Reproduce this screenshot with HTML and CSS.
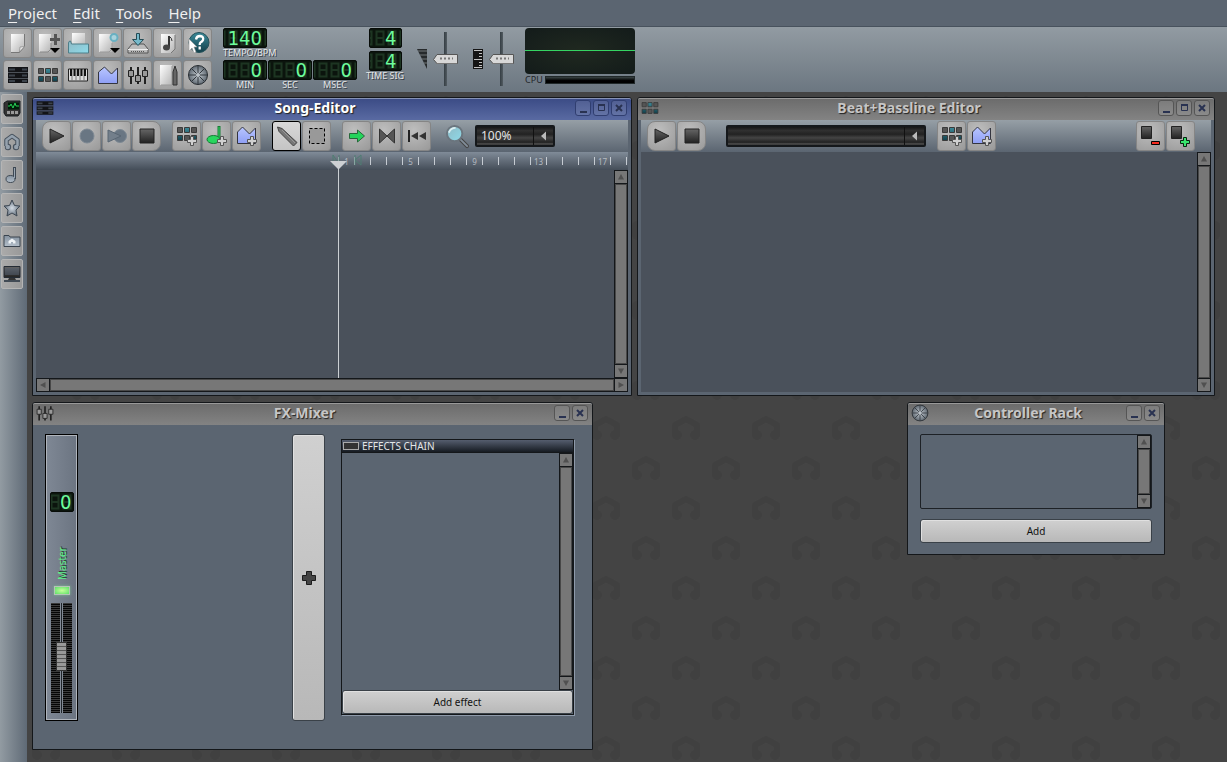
FILE: index.html
```html
<!DOCTYPE html>
<html lang="en">
<head>
  <meta charset="UTF-8">
  <meta name="viewport" content="width=device-width, initial-scale=1.0">
  <title>LMMS</title>
  <link rel="stylesheet" href="styles.css">
</head>
<body>

  <!-- Shared icons -->
  <svg class="defs" aria-hidden="true">
    <defs>
      <linearGradient id="dark" x1="0" y1="0" x2="0" y2="1"><stop offset="0" stop-color="#666"/><stop offset="1" stop-color="#222"/></linearGradient>
      <linearGradient id="paper" x1="0" y1="0" x2="1" y2="1"><stop offset="0" stop-color="#fff"/><stop offset="1" stop-color="#b4b4b4"/></linearGradient>
      <linearGradient id="cyan" x1="0" y1="0" x2="1" y2="1"><stop offset="0" stop-color="#8fb9c4"/><stop offset="1" stop-color="#8edbea"/></linearGradient>
      <linearGradient id="teal" x1="0" y1="0" x2="0" y2="1"><stop offset="0" stop-color="#3d8b9a"/><stop offset="1" stop-color="#123f4a"/></linearGradient>
      <linearGradient id="blue" x1="0" y1="0" x2="0" y2="1"><stop offset="0" stop-color="#b9c6ff"/><stop offset="1" stop-color="#8f9ff5"/></linearGradient>
      <linearGradient id="steel" x1="0" y1="0" x2="0" y2="1"><stop offset="0" stop-color="#8592a0"/><stop offset="1" stop-color="#b4bfca"/></linearGradient>
      <radialGradient id="disc" cx=".5" cy=".5" r=".6"><stop offset="0" stop-color="#c5ccd2"/><stop offset="1" stop-color="#4c5660"/></radialGradient>
      <radialGradient id="star-fill"><stop offset="0" stop-color="#d5dde6"/><stop offset="1" stop-color="#66727f"/></radialGradient>
    </defs>

    <symbol id="page" viewBox="0 0 24 24"><path d="M5 3h13v12l-5 6H5z" fill="url(#paper)"/><path d="M18.500 3v12.500l-5 6H5" fill="none" stroke="#777"/><path d="M13.500 21l.5-5 4.500-.5z" fill="#e4e4e4" stroke="#888" stroke-width=".7"/></symbol>
    <symbol id="new-from" viewBox="0 0 24 24"><path d="M3 3h12v18H3z" fill="url(#paper)"/><path d="M15 12v6l-3 3H4" fill="none" stroke="#888"/><path d="M14 7h4V3h3v4h4v3h-4v4h-3v-4h-4z" fill="#555"/><path d="M14 17h10l-5 5z"/></symbol>
    <symbol id="open" viewBox="0 0 24 24"><path d="M6 2h13v14H6z" fill="url(#paper)"/><path d="M2.500 12q0-2 2-2l1 3h17v9h-20z" fill="url(#cyan)" stroke="#4d7e89"/></symbol>
    <symbol id="recent" viewBox="0 0 24 24"><path d="M3 3h13v18H3z" fill="url(#paper)"/><path d="M16 12v6l-3 3H4" fill="none" stroke="#999"/><circle cx="18" cy="6.500" r="3.500" fill="#aad2dc" stroke="#69b0c2" stroke-width="2"/><path d="M14 17h10l-5 5z"/></symbol>
    <symbol id="save" viewBox="0 0 24 24"><path d="M6 13h12l4 5v4H2v-4z" fill="#bbb" stroke="#555"/><path d="M2 18.500h20" stroke="#eee"/><path d="M5 20.500h14" stroke="#555" stroke-dasharray="1"/><path d="M10.500 2.500h3v6h4L12 14.500 6.500 8.500h4z" fill="#76b9ca" stroke="#244b55"/></symbol>
    <symbol id="export" viewBox="0 0 24 24"><path d="M5 3h14v15l-4 4H5z" fill="url(#paper)"/><path d="M19 4v14l-4 4" fill="none" stroke="#777"/><path d="M13 5v11" stroke="#333" stroke-width="2"/><path d="M13 5q3 2 3 5" stroke="#333" fill="none"/><ellipse cx="10.500" cy="16.500" rx="3.500" ry="3" fill="#444"/></symbol>
    <symbol id="help" viewBox="0 0 24 24"><circle cx="13" cy="11.500" r="10" fill="url(#teal)" stroke="#235059"/><path d="M10 8.500q.5-3.500 4-3.500 4 .5 3 4-.7 1.500-2.500 2.500-.8.500-.8 2.500M13.700 15.500v3" fill="none" stroke="#fff" stroke-width="2.300"/><path d="M3 8v12l3-3 2 5 2-1-2-5h3z" fill="#fff" stroke="#999" stroke-width=".6"/></symbol>
    <symbol id="song" viewBox="0 0 24 24"><path d="M2 4h20v5H2zM2 10h20v5H2zM2 16h20v4H2z" fill="#121316"/><path d="M3 6.500h6M3 12.500h6M3 18h6M16 6.500h5M16 12.500h5M16 18h5" stroke="#3c434b" stroke-width="2"/><path d="M2 9.500h20M2 15.500h20" stroke="#4c5158"/></symbol>
    <symbol id="beats" viewBox="0 0 24 24"><g stroke="#3a3a3a"><path d="M2.500 5.500h5v5h-5zM16.500 5.500h5v5h-5zM9.500 13.500h5v5h-5z" fill="#555"/><path d="M9.500 5.500h5v5h-5zM2.500 13.500h5v5h-5zM16.500 13.500h5v5h-5z" fill="url(#teal)"/></g></symbol>
    <symbol id="beats-add" viewBox="0 0 24 24"><g stroke="#3a3a3a"><path d="M2.500 3.500h5v5h-5zM16.500 3.500h5v5h-5zM9.500 11.500h5v5h-5z" fill="#555"/><path d="M9.500 3.500h5v5h-5zM2.500 11.500h5v5h-5zM16.500 11.500h5v5h-5z" fill="url(#teal)"/></g><use href="#plus" width="24" height="24"/></symbol>
    <symbol id="plus" viewBox="0 0 24 24"><path d="M15.500 12.500h3v3h3v3h-3v3h-3v-3h-3v-3h3z" fill="#d0d0d0" stroke="#555"/></symbol>
    <symbol id="piano" viewBox="0 0 24 24"><path d="M2.500 6h19v12h-19z" fill="#ddd" stroke="#222"/><path d="M6 6v12M10 6v12M14 6v12M18 6v12" stroke="#777"/><path d="M5 6v7M8.500 6v7M12 6v7M15.500 6v7M19 6v7" stroke="#111" stroke-width="2"/></symbol>
    <symbol id="auto" viewBox="0 0 24 24"><path d="M2.500 20.500V9l6-5 7 7 6-6v15.500z" fill="url(#blue)" stroke="#34353f"/></symbol>
    <symbol id="auto-add" viewBox="0 0 24 24"><path d="M2.500 19.500V8l5-5 7 7 6-6v15.500z" fill="url(#blue)" stroke="#34353f"/><use href="#plus" width="24" height="24"/></symbol>
    <symbol id="mixer" viewBox="0 0 24 24"><path d="M5 4v17M12 4v17M19 4v17" stroke="#222" stroke-width="2"/><path d="M2.500 7.500h5v6h-5zM9.500 12.500h5v6h-5zM16.500 7.500h5v6h-5z" fill="#999" stroke="#222"/></symbol>
    <symbol id="notes" viewBox="0 0 24 24"><path d="M4 2h12v20H4z" fill="url(#paper)"/><path d="M16 3v19H5" fill="none" stroke="#999"/><path d="M17 9l2-6 2 6v13h-4z" fill="#666" stroke="#333"/></symbol>
    <symbol id="wheel" viewBox="0 0 24 24"><circle cx="12" cy="12" r="9.500" fill="url(#disc)" stroke="#262b30"/><path d="M12 3v18M3 12h18M5.600 5.600l12.800 12.800M5.600 18.400L18.400 5.600" stroke="#30363c"/><circle cx="12" cy="12" r="2" fill="#bac1c7"/></symbol>

    <symbol id="play" viewBox="0 0 24 24"><path d="M5 5l14 7-14 7z" fill="url(#dark)" stroke="#222"/></symbol>
    <symbol id="record" viewBox="0 0 24 24"><circle cx="12" cy="12" r="7" fill="#697683" stroke="#7d8893"/></symbol>
    <symbol id="record-play" viewBox="0 0 24 24"><circle cx="15" cy="12" r="6.500" fill="#697683" stroke="#7d8893"/><path d="M3 6l13 6-13 6z" fill="#737f8b" stroke="#596673"/></symbol>
    <symbol id="stop" viewBox="0 0 24 24"><path d="M5 5h14v14H5z" fill="url(#dark)" stroke="#222"/></symbol>
    <symbol id="sample-add" viewBox="0 0 24 24"><path d="M14 2v14" stroke="#167c36" stroke-width="3"/><path d="M14 3v12" stroke="#32d565"/><ellipse cx="8.500" cy="15.500" rx="6.500" ry="4" fill="#28d65e" stroke="#167c36"/><use href="#plus" width="24" height="24"/></symbol>
    <symbol id="pencil" viewBox="0 0 24 24"><path d="M2.500 3l4.500 1.500 15 14-3.500 3.500L4 7.500z" fill="#777" stroke="#444"/><path d="M7 6l13 13" stroke="#999"/></symbol>
    <symbol id="select" viewBox="0 0 24 24"><path d="M4.500 4.500h15v15h-15z" fill="#999" stroke="#000" stroke-dasharray="3 2"/></symbol>
    <symbol id="follow" viewBox="0 0 24 24"><path d="M4.500 9.500h8V6l7 6-7 6v-3.500h-8z" fill="#24d45b" stroke="#27673a"/></symbol>
    <symbol id="loop" viewBox="0 0 24 24"><path d="M4.500 5l7.500 7-7.500 7zM19.500 5L12 12l7.500 7z" fill="#555" stroke="#333"/></symbol>
    <symbol id="rewind" viewBox="0 0 24 24"><path d="M4 6v12" stroke="#222" stroke-width="2"/><path d="M13 8v8l-7-4zM21 8v8l-7-4z" fill="#333"/></symbol>
    <symbol id="zoom" viewBox="0 0 26 26"><path d="M16 16l7 7" stroke="#444" stroke-width="4" stroke-linecap="round"/><path d="M16 16l7 7" stroke="#818d98" stroke-width="2" stroke-linecap="round"/><circle cx="10" cy="10" r="8" fill="url(#cyan)" stroke="#6b757e" stroke-width="2"/><path d="M4 9q2-5 7-5" stroke="#dceff2" stroke-width="2" fill="none"/></symbol>
    <symbol id="step-remove" viewBox="0 0 24 24"><path d="M2.500 2.500h10v12h-10z" fill="url(#dark)" stroke="#222"/><path d="M12.500 17.500h8v3h-8z" fill="#f42b20" stroke="#000"/></symbol>
    <symbol id="step-add" viewBox="0 0 24 24"><path d="M2.500 2.500h10v12h-10z" fill="url(#dark)" stroke="#222"/><path d="M14.500 13.500h3v3h3v3h-3v3h-3v-3h-3v-3h3z" fill="#38e56d" stroke="#06250f"/></symbol>

    <symbol id="plugins" viewBox="0 0 18 18"><path d="M1 3l3-2h13v12l-2 3H3l-2-3z" fill="#333" stroke="#171b1f"/><path d="M5 2.500h11v7H5z" fill="#001d09"/><path d="M5 6h2l1-2 2 4 2-5 1 3h3" fill="none" stroke="#27cf55"/><path d="M4 11h3v3H4zM8 11h3v3H8zM12 11h3v3h-3z" fill="#999"/></symbol>
    <symbol id="horseshoe" viewBox="0 0 18 18"><path d="M3.500 13V7L9 3l5.500 4v6" fill="none" stroke="#46515d" stroke-width="4.500" stroke-linejoin="round"/><circle cx="5" cy="14" r="3.200" fill="#46515d"/><circle cx="13" cy="14" r="3.200" fill="#46515d"/><path d="M3.500 13V7L9 3l5.500 4v6" fill="none" stroke="#95a1ad" stroke-width="2.500" stroke-linejoin="round"/><circle cx="4.800" cy="14" r="2.200" fill="#95a1ad"/><circle cx="13.200" cy="14" r="2.200" fill="#95a1ad"/></symbol>
    <symbol id="note" viewBox="0 0 18 18"><path d="M11.500 1v12" stroke="#3e4853" stroke-width="3"/><ellipse cx="7.500" cy="13" rx="4.500" ry="3.500" fill="url(#steel)" stroke="#3e4853"/><path d="M11.500 2v10" stroke="#9aa6b2"/></symbol>
    <symbol id="star" viewBox="0 0 18 18"><path d="M9 1l2.500 5.500 5.500.5-4 4 1 6-5-3-5 3 1-6-4-4 5.500-.5z" fill="url(#star-fill)" stroke="#3e4853"/></symbol>
    <symbol id="folder" viewBox="0 0 18 18"><path d="M1 3.500h5l1 1.500h10v9.500H1z" fill="url(#steel)" stroke="#3a444f"/><path d="M5.500 11.500V9L9 6.500 12.500 9v2.500h-2.500V10H8v1.500z" fill="#eef2f5"/></symbol>
    <symbol id="computer" viewBox="0 0 18 18"><path d="M1 1.500h16v11H1z" fill="url(#dark)" stroke="#242b34"/><path d="M2 3h14v7H2z" fill="#536071" opacity=".5"/><path d="M6 13h6l1 2H5z" fill="#333"/><path d="M1 16h16" stroke="#424b55" stroke-width="2"/></symbol>

    <symbol id="minimize" viewBox="0 0 14 14"><path d="M4 11h7" stroke="#293251" stroke-width="2"/></symbol>
    <symbol id="maximize" viewBox="0 0 14 14"><path d="M4.500 4.500h6v5h-6z" fill="none" stroke="#293251"/><path d="M4 4h7" stroke="#293251" stroke-width="2"/></symbol>
    <symbol id="close" viewBox="0 0 14 14"><path d="M4 4l6 6M10 4l-6 6" stroke="#293251" stroke-width="2"/></symbol>
    <symbol id="up" viewBox="0 0 12 12"><path d="M3 8.500L6 3l3 5.500z" fill="#505050"/></symbol>
    <symbol id="down" viewBox="0 0 12 12"><path d="M3 3.500L6 9l3-5.500z" fill="#505050"/></symbol>
    <symbol id="left" viewBox="0 0 12 12"><path d="M8.500 3L3 6l5.500 3z" fill="#505050"/></symbol>
    <symbol id="right" viewBox="0 0 12 12"><path d="M3.500 3L9 6 3.500 9z" fill="#505050"/></symbol>
  </svg>

  <nav class="menubar">
    <a href="#project"><u>P</u>roject</a>
    <a href="#edit"><u>E</u>dit</a>
    <a href="#tools"><u>T</u>ools</a>
    <a href="#help-menu"><u>H</u>elp</a>
  </nav>

  <header class="toolbar">
    <div class="main-buttons">
      <button class="tool" aria-label="New project"><svg><use href="#page"/></svg></button>
      <button class="tool" aria-label="New from template"><svg><use href="#new-from"/></svg></button>
      <button class="tool" aria-label="Open project"><svg><use href="#open"/></svg></button>
      <button class="tool" aria-label="Recent projects"><svg><use href="#recent"/></svg></button>
      <button class="tool" aria-label="Save project"><svg><use href="#save"/></svg></button>
      <button class="tool" aria-label="Export project"><svg><use href="#export"/></svg></button>
      <button class="tool" aria-label="What's this?"><svg><use href="#help"/></svg></button>
      <button class="tool" aria-label="Song editor"><svg><use href="#song"/></svg></button>
      <button class="tool" aria-label="Beat+Bassline editor"><svg><use href="#beats"/></svg></button>
      <button class="tool" aria-label="Piano roll"><svg><use href="#piano"/></svg></button>
      <button class="tool" aria-label="Automation editor"><svg><use href="#auto"/></svg></button>
      <button class="tool" aria-label="FX mixer"><svg><use href="#mixer"/></svg></button>
      <button class="tool" aria-label="Project notes"><svg><use href="#notes"/></svg></button>
      <button class="tool" aria-label="Controller rack"><svg><use href="#wheel"/></svg></button>
    </div>

    <div class="counters">
      <div class="counter tempo"><output class="lcd">140</output><span>TEMPO/BPM</span></div>
      <div class="counter"><output class="lcd">0</output><span>MIN</span></div>
      <div class="counter"><output class="lcd">0</output><span>SEC</span></div>
      <div class="counter"><output class="lcd">0</output><span>MSEC</span></div>
    </div>

    <div class="counter timesig">
      <output class="lcd small">4</output>
      <output class="lcd small">4</output>
      <span>TIME SIG</span>
    </div>

    <div class="master">
      <svg class="master-icon" viewBox="0 0 10 20"><path d="M0 0h10v20z" fill="#262a2c"/><path d="M1 2h9M3 6h7M5 10h5M7 14h3" stroke="#707679"/></svg>
      <input class="slider" type="range" aria-label="Master volume">
    </div>
    <div class="master">
      <svg class="master-icon" viewBox="0 0 10 20"><path d="M0 0h10v20H0z" fill="#151515"/><path d="M1 1.500h8M6 4.500h3M6 7.500h3M1 10.500h8M6 13.500h3M6 16.500h3M1 18.500h8" stroke="#c2c2c2"/></svg>
      <input class="slider" type="range" aria-label="Master pitch">
    </div>

    <div class="monitor">
      <div class="scope"></div>
      <div class="cpu"><span>CPU</span><div class="cpu-bar"></div></div>
    </div>
  </header>

  <main class="main">
    <aside class="sidebar">
      <button class="tab" aria-label="Instrument plugins"><svg><use href="#plugins"/></svg></button>
      <button class="tab" aria-label="My projects"><svg><use href="#horseshoe"/></svg></button>
      <button class="tab" aria-label="My samples"><svg><use href="#note"/></svg></button>
      <button class="tab" aria-label="My presets"><svg><use href="#star"/></svg></button>
      <button class="tab" aria-label="My home"><svg><use href="#folder"/></svg></button>
      <button class="tab" aria-label="Root directory"><svg><use href="#computer"/></svg></button>
    </aside>

    <div class="workspace">
      <svg class="wallpaper" width="100%" height="100%" aria-hidden="true">
        <defs>
          <g id="shoe">
            <path d="M8 22v-9l11-6 11 6v9" fill="none" stroke="#404040" stroke-width="6" stroke-linejoin="round"/>
            <circle cx="10" cy="23" r="5" fill="#404040"/>
            <circle cx="28" cy="23" r="5" fill="#404040"/>
          </g>
          <pattern id="wall" width="80" height="80" patternUnits="userSpaceOnUse">
            <use href="#shoe"/>
            <use href="#shoe" x="40" y="40"/>
          </pattern>
        </defs>
        <rect width="100%" height="100%" fill="url(#wall)"/>
      </svg>

      <!-- Song editor -->
      <section class="window song-editor active">
        <div class="titlebar">
          <svg class="title-icon"><use href="#song"/></svg>
          <h2>Song-Editor</h2>
          <div class="window-buttons">
            <button aria-label="Minimize"><svg><use href="#minimize"/></svg></button>
            <button aria-label="Maximize"><svg><use href="#maximize"/></svg></button>
            <button aria-label="Close"><svg><use href="#close"/></svg></button>
          </div>
        </div>
        <div class="window-body">
          <div class="editor-bar">
            <div class="group rounded">
              <button class="tool" aria-label="Play"><svg><use href="#play"/></svg></button>
              <button class="tool" aria-label="Record"><svg><use href="#record"/></svg></button>
              <button class="tool" aria-label="Record while playing"><svg><use href="#record-play"/></svg></button>
              <button class="tool" aria-label="Stop"><svg><use href="#stop"/></svg></button>
            </div>
            <div class="group">
              <button class="tool" aria-label="Add beat/bassline"><svg><use href="#beats-add"/></svg></button>
              <button class="tool" aria-label="Add sample track"><svg><use href="#sample-add"/></svg></button>
              <button class="tool" aria-label="Add automation track"><svg><use href="#auto-add"/></svg></button>
            </div>
            <div class="group">
              <button class="tool checked" aria-label="Draw mode"><svg><use href="#pencil"/></svg></button>
              <button class="tool" aria-label="Select mode"><svg><use href="#select"/></svg></button>
            </div>
            <div class="group">
              <button class="tool" aria-label="Auto scrolling"><svg><use href="#follow"/></svg></button>
              <button class="tool" aria-label="Loop points"><svg><use href="#loop"/></svg></button>
              <button class="tool" aria-label="Back to start"><svg><use href="#rewind"/></svg></button>
            </div>
            <div class="zoom">
              <svg><use href="#zoom"/></svg>
              <select class="combo" aria-label="Zoom"><option>100%</option></select>
            </div>
          </div>
          <div class="ruler">
            <span>1</span><span></span><span></span><span></span>
            <span>5</span><span></span><span></span><span></span>
            <span>9</span><span></span><span></span><span></span>
            <span>13</span><span></span><span></span><span></span>
            <span>17</span><span></span><span></span>
            <svg class="loop-marks" viewBox="0 0 30 12"><path d="M1 1v10M7 1v10M1 1l6 9M23 1v10M29 1v10l-6-5 6-5" fill="none" stroke="#4f7d72"/></svg>
            <svg class="playhead" viewBox="0 0 17 217" preserveAspectRatio="none"><path d="M8.500 8v209" stroke="#ccd0d4"/><path d="M0 0h17L8.500 8.500z" fill="#ccd0d4"/></svg>
          </div>
          <div class="canvas-row">
            <div class="canvas"></div>
            <div class="scrollbar"><button aria-label="Scroll up"><svg><use href="#up"/></svg></button><div class="handle"></div><button aria-label="Scroll down"><svg><use href="#down"/></svg></button></div>
          </div>
          <div class="scrollbar horizontal"><button aria-label="Scroll left"><svg><use href="#left"/></svg></button><div class="handle"></div><button aria-label="Scroll right"><svg><use href="#right"/></svg></button></div>
        </div>
      </section>

      <!-- Beat+Bassline editor -->
      <section class="window beat-editor">
        <div class="titlebar">
          <svg class="title-icon"><use href="#beats"/></svg>
          <h2>Beat+Bassline Editor</h2>
          <div class="window-buttons">
            <button aria-label="Minimize"><svg><use href="#minimize"/></svg></button>
            <button aria-label="Maximize"><svg><use href="#maximize"/></svg></button>
            <button aria-label="Close"><svg><use href="#close"/></svg></button>
          </div>
        </div>
        <div class="window-body">
          <div class="editor-bar">
            <div class="group rounded">
              <button class="tool" aria-label="Play"><svg><use href="#play"/></svg></button>
              <button class="tool" aria-label="Stop"><svg><use href="#stop"/></svg></button>
            </div>
            <select class="combo pattern" aria-label="Beat/bassline"><option></option></select>
            <div class="group">
              <button class="tool" aria-label="Add beat/bassline"><svg><use href="#beats-add"/></svg></button>
              <button class="tool" aria-label="Add automation track"><svg><use href="#auto-add"/></svg></button>
            </div>
            <div class="group steps">
              <button class="tool" aria-label="Remove steps"><svg><use href="#step-remove"/></svg></button>
              <button class="tool" aria-label="Add steps"><svg><use href="#step-add"/></svg></button>
            </div>
          </div>
          <div class="canvas-row">
            <div class="canvas"></div>
            <div class="scrollbar"><button aria-label="Scroll up"><svg><use href="#up"/></svg></button><div class="handle"></div><button aria-label="Scroll down"><svg><use href="#down"/></svg></button></div>
          </div>
        </div>
      </section>

      <!-- FX mixer -->
      <section class="window fx-mixer">
        <div class="titlebar">
          <svg class="title-icon"><use href="#mixer"/></svg>
          <h2>FX-Mixer</h2>
          <div class="window-buttons">
            <button aria-label="Minimize"><svg><use href="#minimize"/></svg></button>
            <button aria-label="Close"><svg><use href="#close"/></svg></button>
          </div>
        </div>
        <div class="mixer-body">
          <div class="channel">
            <output class="lcd mini">0</output>
            <label class="channel-name" for="master-fader">Master</label>
            <button class="led" aria-label="Mute"></button>
            <div class="fader"><input id="master-fader" type="range" value="52"></div>
          </div>
          <button class="flat add-channel" aria-label="Add channel"><svg viewBox="0 0 16 16"><path d="M5.500 1.500h5v4h4v5h-4v4h-5v-4h-4v-5h4z" fill="#444" stroke="#1c1c1c"/></svg></button>
          <div class="effects">
            <div class="effects-head"><button class="switch" aria-label="Enable effects"></button>EFFECTS CHAIN</div>
            <div class="effects-list">
              <div class="scrollbar"><button aria-label="Scroll up"><svg><use href="#up"/></svg></button><div class="handle"></div><button aria-label="Scroll down"><svg><use href="#down"/></svg></button></div>
            </div>
            <button class="flat">Add effect</button>
          </div>
        </div>
      </section>

      <!-- Controller rack -->
      <section class="window controller-rack">
        <div class="titlebar">
          <svg class="title-icon"><use href="#wheel"/></svg>
          <h2>Controller Rack</h2>
          <div class="window-buttons">
            <button aria-label="Minimize"><svg><use href="#minimize"/></svg></button>
            <button aria-label="Close"><svg><use href="#close"/></svg></button>
          </div>
        </div>
        <div class="rack-body">
          <div class="rack-list">
            <div class="scrollbar"><button aria-label="Scroll up"><svg><use href="#up"/></svg></button><div class="handle"></div><button aria-label="Scroll down"><svg><use href="#down"/></svg></button></div>
          </div>
          <button class="flat">Add</button>
        </div>
      </section>
    </div>
  </main>

</body>
</html>
```
FILE: styles.css
```css
* {
  box-sizing: border-box;
}

body {
  margin: 0;
  height: 100vh;
  display: flex;
  flex-direction: column;
  overflow: hidden;
  background: #444;
  color: #e4e6e8;
  font-family: "Noto Sans", "Open Sans", sans-serif;
  font-size: 10px;
}

button {
  font: inherit;
  padding: 0;
  border: none;
}

svg {
  display: block;
}

.defs {
  position: absolute;
  width: 0;
  height: 0;
}

/* Menu */
.menubar {
  display: flex;
  gap: 16px;
  height: 27px;
  padding: 0 8px;
  background: #5b6571;
  border-bottom: 1px solid #48525d;
  font-size: 15px;
  line-height: 27px;
}

.menubar a {
  color: #f0f0f0;
  text-decoration: none;
}

.menubar u {
  text-underline-offset: 3px;
}

/* Main toolbar */
.toolbar {
  display: flex;
  height: 65px;
  padding: 1px 3px;
  background: linear-gradient(#929ba2, #6c7781);
  border-bottom: 1px solid #6c7781;
}

.main-buttons {
  display: grid;
  grid-template-columns: repeat(7, 29px);
  grid-auto-rows: 30px;
  gap: 2px 1px;
}

.tool {
  display: flex;
  align-items: center;
  justify-content: center;
  width: 29px;
  height: 30px;
  background: radial-gradient(circle at 40% 30%, #bebebe, #999);
  border: 1px solid #858585;
  border-radius: 3px;
}

.tool svg {
  width: 24px;
  height: 24px;
}

.tool.checked {
  background: linear-gradient(#d8d8d8, #c4c4c4);
  border: 1px solid #000;
}

.counters {
  display: grid;
  grid-template-columns: repeat(3, 44px);
  grid-auto-rows: 32px;
  gap: 0 1px;
  margin-left: 11px;
}

.counter {
  display: flex;
  flex-direction: column;
  align-items: center;
  font-size: 9px;
  line-height: 10px;
  white-space: nowrap;
  text-shadow: 1px 1px 0 #3a4148;
}

.counter.tempo {
  grid-column: 1 / 4;
  align-items: flex-start;
}

.lcd {
  width: 44px;
  height: 20px;
  flex-shrink: 0;
  padding-right: 4px;
  border: 1px solid #070c08;
  border-radius: 2px;
  background: #0b140d url("data:image/svg+xml,%3Csvg xmlns='http://www.w3.org/2000/svg' width='12' height='18'%3E%3Cpath d='M2.500 2.500h7v13h-7zM2.500 9h7' fill='none' stroke='%231d3522' stroke-width='2'/%3E%3C/svg%3E") right 3px top 0 / 12px 18px;
  color: #6dfc9c;
  font-family: "DejaVu Sans Condensed", Roboto, sans-serif;
  font-size: 20px;
  line-height: 18px;
  text-align: right;
  text-shadow: none;
}

.lcd.small {
  width: 33px;
}

.lcd.mini {
  width: 24px;
  padding-right: 1px;
  background-position: right 0 top 0;
}

.timesig {
  width: 34px;
  margin-left: 11px;
}

.timesig .lcd + .lcd {
  margin-top: 3px;
}

.master {
  display: flex;
  align-items: center;
  gap: 6px;
  margin-left: 15px;
}

.master-icon {
  width: 10px;
  height: 20px;
}

.slider {
  appearance: none;
  writing-mode: vertical-lr;
  direction: rtl;
  width: 25px;
  height: 54px;
  margin: 0;
  background: linear-gradient(90deg, #343d43, #535c62) center / 3px 100% no-repeat;
}

.slider::-webkit-slider-thumb {
  appearance: none;
  width: 25px;
  height: 11px;
  background: url("data:image/svg+xml,%3Csvg xmlns='http://www.w3.org/2000/svg' width='25' height='11'%3E%3Cpath d='M.5 5.500L4 .5h20.500v9H4z' fill='%23d8d8d8' stroke='%23555'/%3E%3Cpath d='M3 9.500h21' stroke='%23777'/%3E%3Cpath d='M7 4.500h13' stroke='%23777' stroke-width='2' stroke-dasharray='2'/%3E%3C/svg%3E");
}

.monitor {
  width: 110px;
  margin-left: 11px;
}

.scope {
  height: 46px;
  border-radius: 4px;
  background: linear-gradient(#35d462, #35d462) 0 22px / 100% 1px no-repeat, radial-gradient(#202920, #131b1a);
}

.cpu {
  display: flex;
  align-items: center;
  gap: 2px;
  height: 12px;
  color: #1e2429;
  font-size: 9px;
  line-height: 12px;
}

.cpu-bar {
  flex: 1;
  height: 8px;
  background: linear-gradient(#3b4546, #000 60%);
  border: 1px solid #202829;
}

/* Sidebar */
.main {
  flex: 1;
  display: flex;
  min-height: 0;
}

.sidebar {
  width: 27px;
  display: flex;
  flex-direction: column;
  gap: 3px;
  padding: 2px 1px;
  background: linear-gradient(90deg, #929ba2, #5f6a76);
}

.tab {
  display: flex;
  align-items: center;
  justify-content: center;
  width: 22px;
  height: 30px;
  background: linear-gradient(90deg, #aaa, #999);
  border: 1px solid #b5b5b5;
  border-radius: 2px;
}

.tab svg {
  width: 18px;
  height: 18px;
}

/* Workspace */
.workspace {
  position: relative;
  flex: 1;
  background: #444;
  overflow: hidden;
}

.wallpaper {
  position: absolute;
  inset: 0;
}

.window {
  position: absolute;
  display: flex;
  flex-direction: column;
  background: #5b6571;
  border: 1px solid #14171a;
  border-radius: 3px 3px 0 0;
}

.song-editor {
  left: 5px;
  top: 5px;
  width: 600px;
  height: 299px;
}

.beat-editor {
  left: 610px;
  top: 5px;
  width: 578px;
  height: 299px;
}

.fx-mixer {
  left: 5px;
  top: 310px;
  width: 561px;
  height: 348px;
}

.controller-rack {
  left: 880px;
  top: 310px;
  width: 258px;
  height: 153px;
}

.titlebar {
  display: flex;
  align-items: center;
  height: 22px;
  flex-shrink: 0;
  padding: 0 4px 4px 2px;
  background: linear-gradient(#6c6c6c, #838383);
  border-top: 1px solid #999;
  border-radius: 2px 2px 0 0;
  color: #c6c6c6;
}

.active .titlebar {
  background: linear-gradient(#3c4c86, #596aa2);
  border-color: #8692b5;
  color: #fff;
}

.title-icon {
  width: 20px;
  height: 20px;
}

.titlebar h2 {
  flex: 1;
  margin: 0;
  font-size: 14px;
  line-height: 18px;
  text-align: center;
  text-shadow: 1px 1px 1px #222;
}

.window-buttons {
  display: flex;
  gap: 2px;
}

.window-buttons button {
  width: 16px;
  height: 16px;
  background: rgba(255, 255, 255, 0.1);
  border: 1px solid #555;
  border-radius: 3px;
}

.active .window-buttons button {
  border-color: #303e70;
}

.window-buttons svg {
  width: 14px;
  height: 14px;
}

.window-body {
  flex: 1;
  display: flex;
  flex-direction: column;
  padding: 0 3px 3px;
}

.editor-bar {
  display: flex;
  align-items: center;
  gap: 11px;
  height: 32px;
  padding: 0 6px;
  background: linear-gradient(#969fa6, #5b6571);
}

.group {
  display: flex;
  gap: 1px;
}

.rounded .tool:first-child {
  border-radius: 8px 3px 3px 8px;
}

.rounded .tool:last-child {
  border-radius: 3px 8px 8px 3px;
}

.zoom {
  display: flex;
  align-items: center;
  gap: 5px;
  margin-left: 3px;
}

.zoom svg {
  width: 25px;
  height: 25px;
}

.combo {
  appearance: none;
  width: 80px;
  height: 22px;
  padding: 0 4px;
  border: 2px solid #15181b;
  border-radius: 2px;
  color: #e4e4e4;
  font-family: inherit;
  font-size: 12px;
  line-height: 18px;
  background: url("data:image/svg+xml,%3Csvg xmlns='http://www.w3.org/2000/svg' width='20' height='18'%3E%3Cpath d='M.5 0v18' stroke='%23111'/%3E%3Cpath d='M13 4.500v9l-5-4.500z' fill='%23bbb'/%3E%3C/svg%3E") right center no-repeat, linear-gradient(#161616, #303030 20%, #222 40%, #444 60%, #222 85%, #555 95%, #222);
}

.combo.pattern {
  width: 200px;
  margin-left: 9px;
}

.steps {
  margin-left: auto;
  margin-right: 10px;
}

.ruler {
  position: relative;
  display: flex;
  align-items: center;
  height: 18px;
  padding-left: 302px;
  background: linear-gradient(#808b98, #444d58);
}

.ruler span {
  flex: 0 0 16px;
  height: 8px;
  border-left: 1px solid #c5cbd2;
  color: #b5bbc2;
  font-size: 8px;
  line-height: 10px;
  text-align: center;
}

.ruler span:last-of-type {
  flex-basis: 1px;
}

.loop-marks {
  position: absolute;
  left: 296px;
  top: 2px;
  width: 30px;
  height: 12px;
}

.playhead {
  position: absolute;
  left: 294px;
  top: 9px;
  width: 17px;
  height: 217px;
}

.canvas-row {
  flex: 1;
  display: flex;
  min-height: 0;
}

.canvas {
  flex: 1;
  background: #4a515b;
}

/* Scrollbars */
.scrollbar {
  display: flex;
  flex-direction: column;
  width: 14px;
  flex-shrink: 0;
  border: 1px solid #14171a;
  background: #14171a;
  gap: 1px;
}

.scrollbar button {
  width: 12px;
  height: 12px;
  background: #777;
}

.scrollbar svg {
  width: 12px;
  height: 12px;
}

.handle {
  flex: 1;
  background: #777;
  border: 1px solid #484848;
}

.scrollbar.horizontal {
  flex-direction: row;
  width: auto;
  height: 14px;
}

/* FX mixer */
.mixer-body {
  flex: 1;
  display: flex;
  align-items: flex-start;
  padding: 9px 18px 28px 12px;
}

.channel {
  display: flex;
  flex-direction: column;
  align-items: center;
  width: 33px;
  height: 287px;
  padding-top: 57px;
  background: linear-gradient(90deg, #7f8895, #6b7481);
  border: 1px solid #000;
  box-shadow: inset 0 0 0 1px #b0b5bc;
}

.channel-name {
  height: 74px;
  padding-top: 6px;
  writing-mode: vertical-rl;
  transform: rotate(180deg);
  color: #5cf08c;
  line-height: 14px;
  text-shadow: 1px 1px 0 #26402f;
}

.led {
  width: 16px;
  height: 9px;
  background: radial-gradient(#c5ff9a, #5ee069);
  border: 1px solid #b6c4b8;
  box-shadow: 0 0 3px #7bbf91;
}

.fader {
  width: 21px;
  height: 110px;
  margin-top: 8px;
  background:
    linear-gradient(90deg, transparent 9px, #6b7481 9px, #9ba2ac 10px, #20252a 10px, #20252a 11px, #9ba2ac 11px, #6b7481 12px, transparent 12px),
    repeating-linear-gradient(#3b3b3b 0 1px, #050505 1px 2px);
}

.fader input {
  appearance: none;
  writing-mode: vertical-lr;
  direction: rtl;
  width: 21px;
  height: 110px;
  margin: 0;
  background: none;
}

.fader input::-webkit-slider-thumb {
  appearance: none;
  width: 11px;
  height: 29px;
  background: repeating-linear-gradient(#999 0 3px, #555 3px 4px);
  border: 1px solid #333;
}

.flat {
  height: 24px;
  background: linear-gradient(#d0d0d0, #b8b8b8);
  border: 1px solid #3a4148;
  border-radius: 3px;
  box-shadow: inset 1px 1px 0 #e0e0e0;
  color: #111;
}

.add-channel {
  display: flex;
  align-items: center;
  justify-content: center;
  width: 33px;
  height: 287px;
  margin-left: auto;
  margin-right: 16px;
}

.add-channel svg {
  width: 16px;
  height: 16px;
}

.effects {
  display: flex;
  flex-direction: column;
  width: 233px;
  height: 276px;
  margin-top: 5px;
  border: 1px solid #14171a;
  box-shadow: 1px 1px 0 #8e9aaa;
}

.effects-head {
  display: flex;
  align-items: center;
  gap: 3px;
  height: 12px;
  padding-left: 1px;
  background: linear-gradient(#555d6e, #161b22);
  line-height: 12px;
}

.switch {
  width: 16px;
  height: 8px;
  background: #333;
  border: 1px solid #aaa;
}

.effects-list {
  flex: 1;
  display: flex;
  justify-content: flex-end;
  border-top: 1px solid #14171a;
}

/* Controller rack */
.rack-body {
  display: flex;
  flex-direction: column;
  gap: 10px;
  padding: 9px 12px;
}

.rack-list {
  display: flex;
  justify-content: flex-end;
  height: 75px;
  border: 1px solid #1d2126;
  border-radius: 2px;
}
```
